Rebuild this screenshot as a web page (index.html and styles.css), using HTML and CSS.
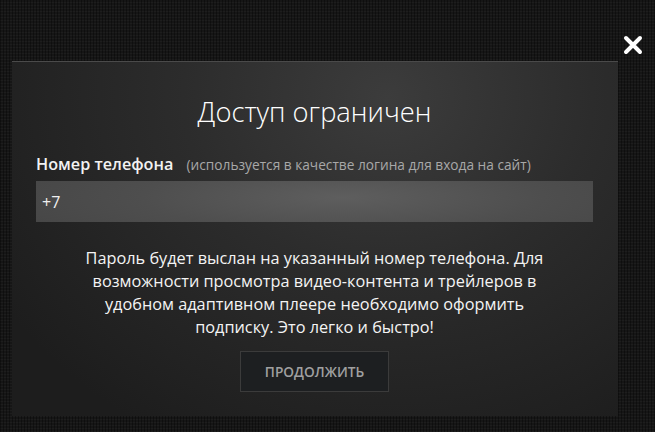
FILE: index.html
```html
<!DOCTYPE html>
<html lang="ru">
<head>
  <meta charset="UTF-8">
  <meta name="viewport" content="width=device-width, initial-scale=1.0">
  <title>Доступ ограничен</title>
  <link rel="stylesheet" href="styles.css">
</head>
<body>
  <div class="overlay">
    <button class="close" aria-label="Закрыть">
      <svg width="20" height="20" viewBox="0 0 20 20">
        <path d="M3 3 L17 17 M17 3 L3 17" stroke="#fff" stroke-width="4" stroke-linecap="round"/>
      </svg>
    </button>
    <div class="modal">
      <h1>Доступ ограничен</h1>
      <label class="field-label" for="phone">Номер телефона <span class="hint">(используется в качестве логина для входа на сайт)</span></label>
      <input type="text" id="phone" class="phone" value="+7">
      <p class="note">Пароль будет выслан на указанный номер телефона. Для возможности просмотра видео-контента и трейлеров в удобном адаптивном плеере необходимо оформить подписку. Это легко и быстро!</p>
      <div class="actions">
        <button class="btn">Продолжить</button>
      </div>
    </div>
  </div>
</body>
</html>
```

FILE: styles.css
```css
html, body {
  height: 100%;
}
body {
  margin: 0;
  font-family: 'Open Sans', sans-serif;
  color: #fff;
  background-color: #161616;
  background-image:
    repeating-linear-gradient(90deg, rgba(0,0,0,0.35) 0 1px, transparent 1px 3px),
    repeating-linear-gradient(0deg, rgba(255,255,255,0.03) 0 1px, transparent 1px 3px);
}
.overlay {
  position: relative;
  padding: 61px 0 0 12px;
}
.close {
  position: absolute;
  top: 35px;
  left: 623px;
  padding: 0;
  border: none;
  background: none;
  cursor: pointer;
}
.close svg {
  display: block;
}
.modal {
  box-sizing: border-box;
  width: 606px;
  height: 355px;
  padding: 31px 25px 25px 24px;
  border-top: 1px solid #4a4a4a;
  background: radial-gradient(ellipse 75% 110% at 62% 10%, #3c3c3c 0%, #2c2c2c 45%, #1d1d1d 100%);
}
h1 {
  margin: 0;
  font-size: 27.3px;
  line-height: 38px;
  font-weight: 300;
  text-align: center;
}
.field-label {
  display: block;
  margin-top: 23px;
  font-size: 16.2px;
  line-height: 20px;
  font-weight: 600;
  color: #f2f2f2;
}
.hint {
  margin-left: 9px;
  font-size: 13.7px;
  font-weight: 400;
  color: #a8a8a8;
}
.phone {
  display: block;
  box-sizing: border-box;
  width: 557px;
  height: 41px;
  margin-top: 6px;
  padding: 0 6px;
  border: none;
  outline: none;
  font-family: 'Open Sans', sans-serif;
  font-size: 16px;
  color: #f0f0f0;
  background: radial-gradient(ellipse 60% 140% at 55% 40%, #5e5e5e 0%, #4e4e4e 60%, #474747 100%);
}
.note {
  margin: 25px auto 0;
  width: 464px;
  font-size: 16.3px;
  line-height: 23px;
  text-align: center;
  color: #f4f4f4;
}
.actions {
  display: flex;
  justify-content: center;
  margin-top: 12px;
}
.btn {
  box-sizing: border-box;
  width: 149px;
  height: 41px;
  border: 1px solid #3b3b3b;
  background: #1d1f21;
  color: #a0a0a0;
  font-family: 'Open Sans', sans-serif;
  font-size: 13.7px;
  font-weight: 600;
  text-transform: uppercase;
  cursor: pointer;
}
```
